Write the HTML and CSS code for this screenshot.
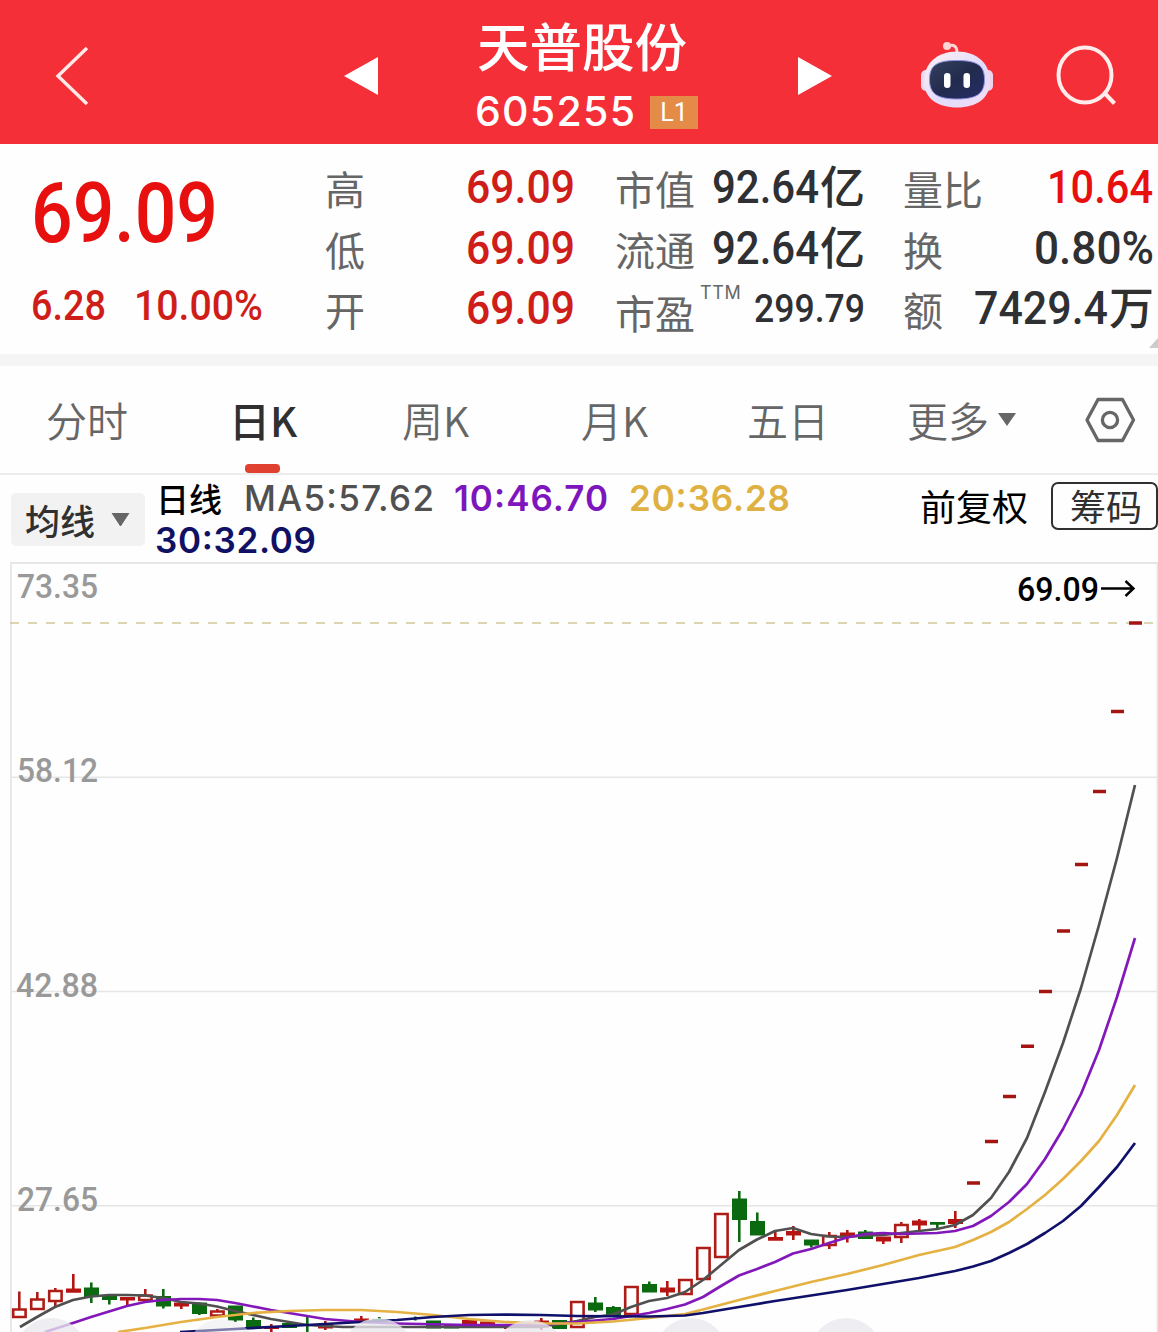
FILE: index.html
```html
<!DOCTYPE html>
<html lang="zh-CN">
<head>
<meta charset="utf-8">
<title>天普股份 605255</title>
<link rel="stylesheet" href="styles.css">
</head>
<body>
<header class="topbar">
  <svg class="back" width="36" height="62" viewBox="54 45 36 62"><path d="M87 48 58 76l29 28" fill="none" stroke="#ffe9e8" stroke-width="3.4"/></svg>
  <svg class="prev" width="36" height="40" viewBox="343 56 36 40"><path d="M344 76 378 57v38z" fill="#fff"/></svg>
  <div class="stock">
    <h1>天普股份</h1>
    <div class="code">
      <svg class="num inter" width="160" height="40"><text x="0" y="34" textLength="160">605255</text></svg>
      <span class="level">L1</span>
    </div>
  </div>
  <svg class="next" width="36" height="40" viewBox="797 56 36 40"><path d="M832 76 798 57v38z" fill="#fff"/></svg>
  <svg class="robot" width="76" height="72" viewBox="919 40 76 72">
    <defs>
      <linearGradient id="shell" x1="0" y1="0" x2="1" y2="1"><stop offset="0" stop-color="#fff1f2"/><stop offset=".55" stop-color="#e2dcfb"/><stop offset="1" stop-color="#f3dcf3"/></linearGradient>
      <linearGradient id="visor" x1="0" y1="0" x2="1" y2="1"><stop offset="0" stop-color="#35415f"/><stop offset=".5" stop-color="#222b4d"/><stop offset="1" stop-color="#252d68"/></linearGradient>
    </defs>
    <path d="M948 46q9-3 9 7" fill="none" stroke="#ffd5d8" stroke-width="3"/>
    <circle cx="947" cy="46" r="4" fill="#ffd5d8"/>
    <rect x="921" y="70" width="11" height="21" rx="5" fill="#eedaf0"/>
    <rect x="982" y="70" width="11" height="21" rx="5" fill="#eed3ec"/>
    <path d="M957 51.500c20 0 33 12 33 30 0 17-14 26-33 26s-33-9-33-26c0-18 13-30 33-30z" fill="url(#shell)"/>
    <path d="M957 60.500c19 0 27.500 4 27.500 19s-9 19.500-27.500 19.500-27.500-4.500-27.500-19.500 8.500-19 27.500-19z" fill="url(#visor)" stroke="#8e91e3" stroke-width="1"/>
    <rect x="944" y="73" width="6.500" height="15" rx="3.200" fill="#fff"/>
    <rect x="963.500" y="73" width="6.500" height="15" rx="3.200" fill="#fff"/>
  </svg>
  <svg class="search" width="62" height="62" viewBox="1055 45 62 62" fill="none" stroke="#ffeceb" stroke-width="4"><ellipse cx="1085" cy="75" rx="26.500" ry="27.500"/><path d="M1103.500 92 1114.500 103.500"/></svg>
</header>

<section class="quote">
  <div class="price">
    <svg class="num bright" width="190" height="70"><text class="big" x="0" y="64" textLength="187" lengthAdjust="spacingAndGlyphs">69.09</text></svg>
    <div class="change">
      <svg class="num red" width="76" height="40"><text class="mid" x="0" y="34" textLength="75" lengthAdjust="spacingAndGlyphs">6.28</text></svg>
      <svg class="num red" width="130" height="40"><text class="mid" x="0" y="34" textLength="129" lengthAdjust="spacingAndGlyphs">10.00%</text></svg>
    </div>
  </div>
  <dl class="stats">
    <div><dt>高</dt><dd><svg class="num red" width="109" height="60"><text x="0" y="45" textLength="109" lengthAdjust="spacingAndGlyphs">69.09</text></svg></dd></div>
    <div><dt>低</dt><dd><svg class="num red" width="109" height="60"><text x="0" y="45" textLength="109" lengthAdjust="spacingAndGlyphs">69.09</text></svg></dd></div>
    <div><dt>开</dt><dd><svg class="num red" width="109" height="60"><text x="0" y="45" textLength="109" lengthAdjust="spacingAndGlyphs">69.09</text></svg></dd></div>
  </dl>
  <dl class="stats">
    <div><dt>市值</dt><dd><svg class="num" width="108" height="60"><text x="0" y="45" textLength="107" lengthAdjust="spacingAndGlyphs">92.64</text></svg><span class="unit">亿</span></dd></div>
    <div><dt>流通</dt><dd><svg class="num" width="108" height="60"><text x="0" y="45" textLength="107" lengthAdjust="spacingAndGlyphs">92.64</text></svg><span class="unit">亿</span></dd></div>
    <div><dt class="pe">市盈<sup>TTM</sup></dt><dd><svg class="num" width="111" height="60"><text class="small" x="0" y="43" textLength="111" lengthAdjust="spacingAndGlyphs">299.79</text></svg></dd></div>
  </dl>
  <dl class="stats">
    <div><dt>量比</dt><dd><svg class="num bright" width="107" height="60"><text x="0" y="45" textLength="106" lengthAdjust="spacingAndGlyphs">10.64</text></svg></dd></div>
    <div><dt>换</dt><dd><svg class="num" width="120" height="60"><text x="0" y="45" textLength="120" lengthAdjust="spacingAndGlyphs">0.80%</text></svg></dd></div>
    <div><dt>额</dt><dd><svg class="num" width="135" height="60"><text x="0" y="45" textLength="134" lengthAdjust="spacingAndGlyphs">7429.4</text></svg><span class="unit">万</span></dd></div>
  </dl>
  <i class="corner"></i>
</section>

<nav class="tabs">
  <a>分时</a>
  <a class="active">日K</a>
  <a>周K</a>
  <a>月K</a>
  <a>五日</a>
  <a>更多<svg width="18" height="14"><path d="M0 0h18l-9 13z" fill="#666"/></svg></a>
  <svg class="gear" width="54" height="50" viewBox="1083 395 54 50" fill="none" stroke="#666" stroke-width="3.300"><path d="M1098 399.500h24.500l11 20.500-11 20.500H1098l-11-20.500z" stroke-linejoin="round"/><circle cx="1110" cy="420" r="7.600"/></svg>
</nav>

<section class="indicator">
  <button class="pick">均线<svg width="19" height="14"><path d="M1 0h17l-8.500 13z" fill="#666" stroke="#666" stroke-linejoin="round"/></svg></button>
  <div class="legend">
    <div class="line">
      <b>日线</b>
      <svg class="num inter ma5" width="188" height="42"><text x="-1" y="32" textLength="190">MA5:57.62</text></svg>
      <svg class="num inter ma10" width="152" height="42"><text x="-1" y="32" textLength="154">10:46.70</text></svg>
      <svg class="num inter ma20" width="161" height="42"><text x="0" y="32" textLength="161">20:36.28</text></svg>
    </div>
    <svg class="num inter ma30" width="162" height="42"><text x="-1" y="32" textLength="161">30:32.09</text></svg>
  </div>
  <span class="adjust">前复权</span>
  <span class="chips">筹码</span>
</section>

<svg class="chart" width="1158" height="770" viewBox="0 562 1158 770">
  <g fill="none" stroke="#e6e6e6" stroke-width="1.800">
    <path d="M11 1332V563H1158M1157.500 563v769"/>
    <path d="M11 777.200H1158M11 991.500H1158M11 1205.700H1158" stroke-width="1.400"/>
  </g>
  <path d="M10 623H1158" stroke="#cfc89b" stroke-width="1.700" stroke-dasharray="9 9"/>
  <g class="axis">
    <text x="17" y="598" textLength="81" lengthAdjust="spacingAndGlyphs">73.35</text>
    <text x="17" y="782" textLength="81" lengthAdjust="spacingAndGlyphs">58.12</text>
    <text x="16" y="996.500" textLength="82" lengthAdjust="spacingAndGlyphs">42.88</text>
    <text x="17" y="1211" textLength="81" lengthAdjust="spacingAndGlyphs">27.65</text>
    <text class="last" x="1017" y="601" textLength="82" lengthAdjust="spacingAndGlyphs">69.09</text>
  </g>
  <path d="M1101 588.500H1133M1125.500 581l8 7.500-8 7.500" fill="none" stroke="#000" stroke-width="2.400"/>

  <!-- rising days: hollow bodies -->
  <g fill="#fff" stroke="#ae1c17" stroke-width="2.600">
    <path d="M19.300 1291.500v18M37.300 1292v7M55.300 1288v2M55.300 1301v5.500M145.300 1289v6M217.300 1309v2M829.300 1232v4M829.300 1245v4M901.300 1222v3M901.300 1237v6"/>
    <path d="M13.200 1309.500h12.400v7.500H13.200zM31.200 1299.500h12.400v9.500H31.200zM49.200 1291h12.400v10H49.200zM139.200 1295.500h12.400v4.500h-12.400zM211.200 1311.500h12.400v4h-12.400zM571.200 1302h12.400v25h-12.400zM625.200 1287h12.400v27h-12.400zM679.200 1280h12.400v14h-12.400zM697.200 1248h12.400v31h-12.400zM715.200 1214h12.400v43h-12.400zM823.200 1236h12.400v9h-12.400zM895.200 1225h12.400v12h-12.400z"/>
  </g>
  <!-- rising days: narrow bodies -->
  <g stroke="#b51512" stroke-width="2.600" fill="#b51512">
    <path d="M73.300 1274v15M127.300 1299v8M181.300 1301v8M271.300 1324v8M325.300 1321v9M361.300 1316v4M541.300 1318v12M667.300 1281v15M775.300 1232v7M793.300 1226v14M847.300 1230v12.500M883.300 1238v6M919.300 1219v11M955.300 1211v17M505.300 1326v3"/>
    <path stroke="none" d="M66 1288.500h15v4.200H66zM120 1297h15v3.600h-15zM174 1302.500h15v4h-15zM264 1326.500h15v2.500h-15zM318 1323.500h15v5h-15zM354 1318.500h15v3h-15zM462 1320h15v7.500h-15zM480 1321.500h15v5.500h-15zM534 1320.500h15v7h-15zM660 1287.500h15v5h-15zM768 1237h15v3.700h-15zM786 1231h15v4.600h-15zM840 1232.500h15v3.500h-15zM876 1236.500h15v5h-15zM912 1220.500h15v5h-15zM948 1219h15v5h-15z"/>
  </g>
  <!-- falling days -->
  <g stroke="#0b690f" stroke-width="2.600" fill="#0b690f">
    <path d="M91.300 1282.500v20.500M109.300 1297v7.500M163.300 1289v19.500M199.300 1303v12M235.300 1306v16M253.300 1317.500v10M307.300 1317v15M415.300 1316.500v4M379.300 1317v6M595.300 1297v15M613.300 1306v8M649.300 1281.500v9M739.300 1191v51M757.300 1212.500v22M811.300 1240v7.500M865.300 1230v8M937.300 1222v6"/>
    <path stroke="none" d="M84 1287.500h15v9.500H84zM102 1296h15v4h-15zM156 1296h15v10.500h-15zM192 1302.500h15v11.500h-15zM228 1305.500h15v15h-15zM246 1320h15v8.500h-15zM282 1323h15v5h-15zM372 1319h15v4h-15zM426 1320.500h15v8h-15zM444 1325h15v3.500h-15zM552 1320h15v9h-15zM588 1302.500h15v8h-15zM606 1307h15v8h-15zM642 1284h15v8.500h-15zM732 1198.500h15v21.500h-15zM750 1221h15v14.500h-15zM804 1239.500h15v6h-15zM858 1231.500h15v7.500h-15zM930 1222h15v2.700h-15z"/>
  </g>
  <!-- consecutive limit-up days -->
  <path d="M967 1183h13M985 1141.500h13M1003 1096.500h13M1021 1046.300h13M1039 991.500h13M1057 931h13M1075 864.500h13M1093 791.500h13M1111 711.500h13M1129 623h13" stroke="#a41512" stroke-width="3.400"/>

  <g fill="none" stroke-width="2.700" stroke-linejoin="round">
    <path stroke="#505050" d="M20 1327 37 1317 55 1307 73 1300 91 1296.500 109 1295H127L145 1295.500 163 1298 181 1302 199 1303.500 217 1306.500 235 1311 253 1315 271 1319 289 1322 307 1325 343 1327H541L577 1321 595 1317 613 1314.500 631 1307 649 1301 667 1298 685 1292 703 1280 721 1265 739 1250 757 1239.500 775 1231 793 1228 811 1234 829 1236.500 847 1237 865 1235.500 883 1235 901 1233 919 1231 937 1229 955 1225 973 1215 991 1198 1009 1172 1027 1138 1045 1092 1063 1043 1081 988 1099 925 1117 858 1135 785"/>
    <path stroke="#8318ba" d="M45 1332 73 1323 91 1317 109 1311.500 127 1306 145 1302 163 1300 181 1299H199L217 1300 235 1303 253 1306.500 271 1310 289 1313 307 1316 325 1319 361 1322 397 1323.500 469 1325H541L577 1322 595 1320.500 613 1319 631 1316 649 1313 667 1309 685 1304.500 703 1297 721 1286 739 1275.500 757 1269 775 1262 793 1253.500 811 1249 829 1243 847 1237.500 865 1234 883 1233 901 1234 937 1233 955 1231 973 1226 991 1216 1009 1202 1027 1184 1045 1159 1063 1129 1081 1094 1099 1050 1117 997 1135 938"/>
    <path stroke="#e4b142" d="M118 1332 145 1328 181 1322 217 1317 253 1313 289 1311 325 1310H361L397 1312 433 1315 469 1319 505 1322 541 1323.500H577L613 1321.500 649 1318 685 1314 703 1309.500 739 1300 775 1291 811 1282 847 1274 883 1265 919 1255 955 1247 973 1240 991 1232 1009 1222 1027 1209 1045 1195 1063 1179 1081 1161 1099 1141 1117 1115 1135 1085"/>
    <path stroke="#10106a" d="M180 1332 235 1329 289 1326 343 1323 397 1320 433 1317 469 1315 505 1314.500 541 1315 577 1316 649 1316.500 685 1315.500 703 1313 739 1307 775 1301 811 1295.500 847 1290 883 1284 919 1278 955 1271 973 1266.500 991 1261 1009 1253 1027 1244 1045 1233 1063 1221 1081 1206 1099 1187 1117 1167 1135 1143"/>
  </g>
  <g fill="#e9e8ee" fill-opacity=".78"><circle cx="51" cy="1354" r="36"/><circle cx="222" cy="1355" r="36" fill-opacity=".5"/><circle cx="378" cy="1354" r="36"/><circle cx="530" cy="1356" r="36"/><circle cx="691" cy="1354" r="36"/><circle cx="846" cy="1354" r="36"/></g>
</svg>
</body>
</html>
```

FILE: styles.css
```css
* { box-sizing: border-box; }
body {
  margin: 0;
  width: 1158px;
  height: 1332px;
  overflow: hidden;
  background: #fefefe;
  color: #303030;
  font-family: "Noto Sans CJK SC", sans-serif;
}
svg { display: block; flex: none; }
.num { overflow: visible; fill: #2f3033; font: 500 46px Roboto, sans-serif; }
.num .big { font-size: 84px; }
.num .mid { font-size: 43px; }
.num .small { font-size: 39px; }
.num.inter { font: 500 35px Inter, sans-serif; }
.red { fill: #cf1d1a; }
.bright { fill: #e80f0f; }

.topbar {
  height: 144px;
  background: #f42f38;
  color: #fff;
  display: grid;
  grid-template-columns: 289px 112px 342px 122px 136px 62px;
  padding: 8px 0 0 54px;
  align-items: center;
}
.stock { padding-left: 20px; margin-top: -22px; }
.stock h1 { margin: 0; font-size: 52.500px; line-height: 62px; font-weight: 500; padding: 15px 0 0 2px; white-space: nowrap; }
.code { display: flex; align-items: center; gap: 15px; height: 40px; margin-top: 17px; }
.code .num.inter { font-size: 41px; fill: #fff; }
.level { width: 48px; height: 33px; background: #e38b47; font: 400 25px/33px Roboto, sans-serif; text-align: center; }

.quote {
  position: relative;
  height: 210px;
  display: grid;
  grid-template-columns: 254px 250px 250px 251px;
  column-gap: 40px;
  padding: 14px 0 0 31px;
}
.price { padding-top: 20px; margin-right: -20px; }
.change { display: flex; gap: 27px; margin-top: 38px; }
.stats { margin: 0; }
.stats:nth-child(4) { margin-left: -2px; margin-right: 2px; }
.stats div { height: 60.400px; display: flex; justify-content: space-between; align-items: center; }
dt { font-size: 40px; line-height: 60px; color: #666; white-space: nowrap; }
dt.pe { padding-top: 7px; display: flex; }
dt sup { font: 400 18px/18px Inter, sans-serif; letter-spacing: .6px; margin: 2px 0 0 5px; }
dd { margin: 0; display: flex; align-items: center; }
.unit { font-size: 45px; line-height: 54px; padding-bottom: 6px; font-weight: 500; }
.corner { position: absolute; right: 0; bottom: 6px; border-top: 10px solid transparent; border-right: 9px solid #ccc; }

.tabs {
  height: 121px;
  border-top: 12px solid #f5f5f5;
  border-bottom: 2px solid #ececec;
  display: grid;
  grid-template-columns: 185px 171px 179px 166px 160px 176px 54px;
  padding-left: 46px;
  align-items: center;
}
.tabs a { height: 107px; line-height: 106px; font-size: 41px; color: #666; display: flex; white-space: nowrap; align-items: center; gap: 9px; font-weight: 350; padding-bottom: 1px; }
.tabs a svg { margin-top: 1px; }
.tabs .active { color: #303030; font-weight: 500; position: relative; margin-left: -2px; }
.active::after { content: ""; position: absolute; left: 16px; bottom: 0; width: 35px; height: 9px; border-radius: 4px; background: #df4030; }

.indicator { height: 87px; display: flex; padding-left: 11px; align-items: flex-start; }
.pick { width: 134px; height: 53px; margin: 18px 11px 0 0; border: 0; border-radius: 5px; background: #f2f2f2; display: flex; align-items: center; padding: 0 0 0 14px; gap: 16px; font: 500 35px/53px "Noto Sans CJK SC", sans-serif; color: #303030; white-space: nowrap; }
.legend { width: 764px; padding-top: 4px; }
.legend .line { display: flex; height: 42px; align-items: center; gap: 22px; }
.legend b { width: 67px; font-size: 33px; font-weight: 500; line-height: 36px; padding-bottom: 4px; color: #000; white-space: nowrap; }
.ma5 { fill: #505050; }
.ma10 { fill: #7e16bd; }
.ma20 { fill: #dfb143; }
.ma30 { fill: #101065; }
.num.ma10, .num.ma20, .num.ma30 { font-weight: 600; }
.adjust { width: 131px; font-size: 36px; line-height: 60px; color: #000; white-space: nowrap; }
.chips { width: 107px; height: 48px; margin-top: 7px; border: 2px solid #303030; border-radius: 7px; font-size: 36px; line-height: 42px; padding-left: 17px; white-space: nowrap; }

.axis text { font: 500 34px Roboto, sans-serif; fill: #999; }
.axis .last { fill: #000; }
```
